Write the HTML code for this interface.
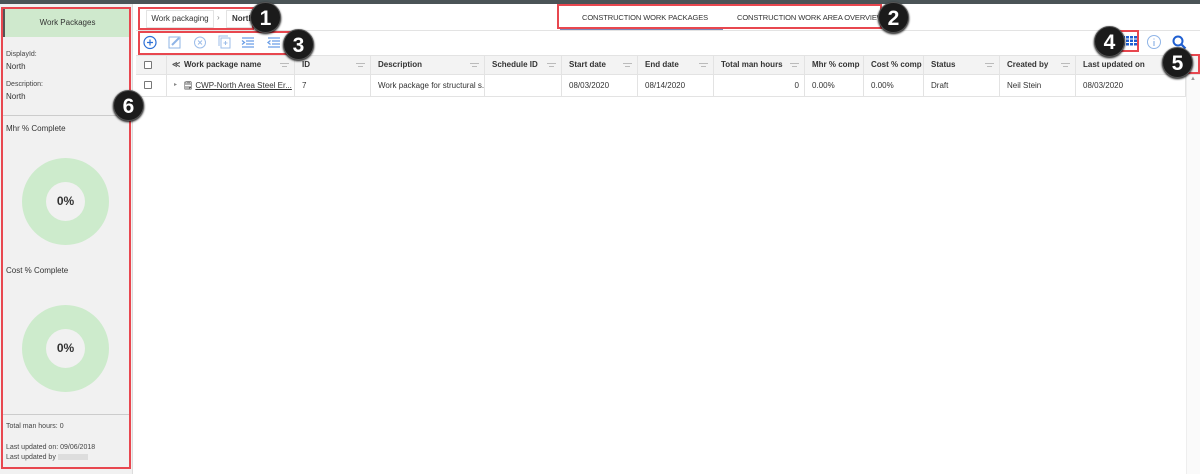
<!DOCTYPE html><html><head><style>
*{box-sizing:border-box;margin:0;padding:0}
body{width:1200px;height:474px;background:#fff;font-family:"Liberation Sans",sans-serif;position:relative;overflow:hidden;color:#333}
.a{position:absolute}
.badge{position:absolute;width:31px;height:31px;border-radius:50%;background:#1b1b1b;color:#fff;font-weight:bold;font-size:21px;text-align:center;line-height:31px;border:1px solid #555;box-shadow:0 1px 2px #000}
.red{position:absolute;border:2px solid #e8474f}
.th{position:absolute;top:55px;height:20px;font-size:8px;font-weight:bold;line-height:20px;padding-left:7px;border-right:1px solid #e3e3e3}
.td{position:absolute;top:75px;height:21px;font-size:8px;line-height:21px;padding-left:7px;border-right:1px solid #e3e3e3;white-space:nowrap;overflow:hidden}
.f{position:absolute;right:5px;top:8px;width:9px;height:5px;border-top:1.5px solid #bbb}
.f:after{content:"";position:absolute;left:2px;right:2px;top:1.5px;border-top:1.5px solid #bbb}
.cb{position:absolute;left:8px;width:8px;height:8px;border:1px solid #777;border-radius:1px;background:#fff}
.sb{font-size:7px;color:#444}
</style></head><body>
<div class="a" style="left:0;top:0;width:1200px;height:4px;background:#4b5457"></div>
<!-- sidebar -->
<div class="a" style="left:0;top:4px;width:133px;height:470px;background:#f1f1f1;border-right:1px solid #ddd"></div>
<div class="a" style="left:3px;top:9px;width:127px;height:28px;background:#cfe9cd;border-left:2px solid #555;font-size:8px;text-align:center;line-height:28px">Work Packages</div>
<div class="a sb" style="left:6px;top:51px">DisplayId:</div>
<div class="a" style="left:6px;top:62px;font-size:8px">North</div>
<div class="a sb" style="left:6px;top:81px">Description:</div>
<div class="a" style="left:6px;top:92px;font-size:8px">North</div>
<div class="a" style="left:3px;top:115px;width:127px;border-top:1px solid #ccc"></div>
<div class="a" style="left:6px;top:124px;font-size:8px">Mhr % Complete</div>
<div class="a" style="left:22px;top:158px;width:87px;height:87px;border-radius:50%;background:#cdebcc"></div>
<div class="a" style="left:46px;top:182px;width:39px;height:39px;border-radius:50%;background:#f1f1f1;font-size:12px;font-weight:bold;text-align:center;line-height:39px">0%</div>
<div class="a" style="left:6px;top:266px;font-size:8px">Cost % Complete</div>
<div class="a" style="left:22px;top:305px;width:87px;height:87px;border-radius:50%;background:#cdebcc"></div>
<div class="a" style="left:46px;top:329px;width:39px;height:39px;border-radius:50%;background:#f1f1f1;font-size:12px;font-weight:bold;text-align:center;line-height:39px">0%</div>
<div class="a" style="left:3px;top:414px;width:127px;border-top:1px solid #ccc"></div>
<div class="a sb" style="left:6px;top:423px">Total man hours: 0</div>
<div class="a sb" style="left:6px;top:444px">Last updated on: 09/06/2018</div>
<div class="a sb" style="left:6px;top:454px">Last updated by <span style="display:inline-block;width:30px;height:6px;background:#ddd;vertical-align:middle"></span></div>
<div class="red" style="left:1px;top:7px;width:130px;height:462px"></div>
<!-- breadcrumb -->
<div class="a" style="left:146px;top:10px;width:68px;height:18px;border:1px solid #e3e3e3;font-size:8px;line-height:16px;text-align:center">Work packaging</div>
<div class="a" style="left:217px;top:13px;font-size:8px;color:#888">›</div>
<div class="a" style="left:226px;top:10px;width:40px;height:18px;border:1px solid #e3e3e3;font-size:8px;line-height:16px;padding-left:5px;font-weight:bold">North</div>
<div class="red" style="left:138px;top:7px;width:116px;height:23px"></div>
<!-- tabs -->
<div class="a" style="left:136px;top:30px;width:1064px;border-top:1px solid #e3e3e3"></div>
<div class="a" style="left:582px;top:13px;font-size:7.5px;letter-spacing:-0.1px">CONSTRUCTION WORK PACKAGES</div>
<div class="a" style="left:737px;top:13px;font-size:7.5px;letter-spacing:-0.1px">CONSTRUCTION WORK AREA OVERVIEW</div>
<div class="a" style="left:560px;top:28px;width:163px;height:2px;background:#7a86b8"></div>
<div class="red" style="left:557px;top:4px;width:325px;height:25px"></div>
<!-- toolbar -->
<svg class="a" style="left:140px;top:32px" width="160" height="22" viewBox="0 0 160 22" fill="none">
<circle cx="10" cy="10.5" r="6" stroke="#2b6fd6" stroke-width="1.2"/><path d="M10 7.5v6M7 10.5h6" stroke="#2b6fd6" stroke-width="1.2"/>
<rect x="29" y="5" width="11" height="11" stroke="#8fb4e6"/><path d="M32 13l7-7" stroke="#8fb4e6" stroke-width="2"/>
<circle cx="60" cy="10.5" r="5.5" stroke="#9dbde9"/><path d="M58 8.5l4 4M62 8.5l-4 4" stroke="#9dbde9"/>
<rect x="81" y="6" width="9" height="10" stroke="#9dbde9"/><path d="M79 14V4h9M85.5 9v4M83.5 11h4" stroke="#9dbde9"/>
<path d="M102 6h12M106 9h8M106 12h8M102 15h12M102 8.5l2.5 2-2.5 2" stroke="#6a9ee6" stroke-width="1.3"/>
<path d="M128 6h12M132 9h8M132 12h8M128 15h12M130.5 8.5l-2.5 2 2.5 2" stroke="#6a9ee6" stroke-width="1.3"/>
</svg>
<div class="red" style="left:138px;top:31px;width:162px;height:24px"></div>
<svg class="a" style="left:1121px;top:34px" width="16" height="14"><g fill="#1f5fd1"><rect x="1" y="2" width="3" height="2.5"/><rect x="5" y="2" width="3" height="2.5"/><rect x="9" y="2" width="3" height="2.5"/><rect x="13" y="2" width="3" height="2.5"/><rect x="1" y="5.5" width="3" height="2.5"/><rect x="5" y="5.5" width="3" height="2.5"/><rect x="9" y="5.5" width="3" height="2.5"/><rect x="13" y="5.5" width="3" height="2.5"/><rect x="1" y="9" width="3" height="2.5"/><rect x="5" y="9" width="3" height="2.5"/><rect x="9" y="9" width="3" height="2.5"/><rect x="13" y="9" width="3" height="2.5"/></g></svg>
<div class="red" style="left:1117px;top:30px;width:22px;height:22px"></div>
<svg class="a" style="left:1146px;top:34px" width="16" height="16"><circle cx="8" cy="8" r="6.5" stroke="#8fb4e6" fill="none"/><path d="M8 7v5M8 4.5v1" stroke="#8fb4e6" stroke-width="1.2"/></svg>
<svg class="a" style="left:1171px;top:34px" width="16" height="16"><circle cx="7" cy="7" r="4.5" stroke="#1f5fd1" stroke-width="2" fill="none"/><path d="M10.5 10.5l4 4" stroke="#1f5fd1" stroke-width="2.2"/></svg>
<!-- table -->
<div class="a" style="left:136px;top:55px;width:1064px;height:20px;background:#f3f3f3;border-top:1px solid #e3e3e3;border-bottom:1px solid #e3e3e3"></div>
<div class="a" style="left:136px;top:96px;width:1050px;border-top:1px solid #e3e3e3"></div>
<div class="th" style="left:136px;width:31px"><span class="cb" style="top:6px"></span></div>
<div class="th" style="left:167px;width:128px;padding-left:17px"><span style="position:absolute;left:5px;top:0;font-size:8px;color:#555">&#8810;</span>Work package name<span class="f"></span></div>
<div class="th" style="left:295px;width:76px">ID<span class="f"></span></div>
<div class="th" style="left:371px;width:114px">Description<span class="f"></span></div>
<div class="th" style="left:485px;width:77px">Schedule ID<span class="f"></span></div>
<div class="th" style="left:562px;width:76px">Start date<span class="f"></span></div>
<div class="th" style="left:638px;width:76px">End date<span class="f"></span></div>
<div class="th" style="left:714px;width:91px">Total man hours<span class="f"></span></div>
<div class="th" style="left:805px;width:59px">Mhr % comp</div>
<div class="th" style="left:864px;width:60px">Cost % comp</div>
<div class="th" style="left:924px;width:76px">Status<span class="f"></span></div>
<div class="th" style="left:1000px;width:76px">Created by<span class="f"></span></div>
<div class="th" style="left:1076px;width:110px">Last updated on</div>
<div class="td" style="left:136px;width:31px"><span class="cb" style="top:6px"></span></div>
<div class="td" style="left:167px;width:128px;padding-left:16px"><span style="position:absolute;left:7px;font-size:6px;color:#888">▸</span>🗒 <u>CWP-North Area Steel Er...</u></div>
<div class="td" style="left:295px;width:76px">7</div>
<div class="td" style="left:371px;width:114px">Work package for structural s...</div>
<div class="td" style="left:485px;width:77px"></div>
<div class="td" style="left:562px;width:76px">08/03/2020</div>
<div class="td" style="left:638px;width:76px">08/14/2020</div>
<div class="td" style="left:714px;width:91px;text-align:right;padding-right:5px">0</div>
<div class="td" style="left:805px;width:59px">0.00%</div>
<div class="td" style="left:864px;width:60px">0.00%</div>
<div class="td" style="left:924px;width:76px">Draft</div>
<div class="td" style="left:1000px;width:76px">Neil Stein</div>
<div class="td" style="left:1076px;width:110px">08/03/2020</div>
<div class="a" style="left:1186px;top:75px;width:14px;height:399px;background:#fafafa;border-left:1px solid #eee"></div>
<div class="a" style="left:1190px;top:76px;font-size:6px;color:#999">▲</div>
<div class="red" style="left:1186px;top:54px;width:14px;height:20px"></div>
<!-- badges -->
<div class="badge" style="left:250px;top:2px">1</div>
<div class="badge" style="left:878px;top:2px">2</div>
<div class="badge" style="left:283px;top:29px">3</div>
<div class="badge" style="left:1094px;top:26px">4</div>
<div class="badge" style="left:1162px;top:47px">5</div>
<div class="badge" style="left:113px;top:90px">6</div>
</body></html>
